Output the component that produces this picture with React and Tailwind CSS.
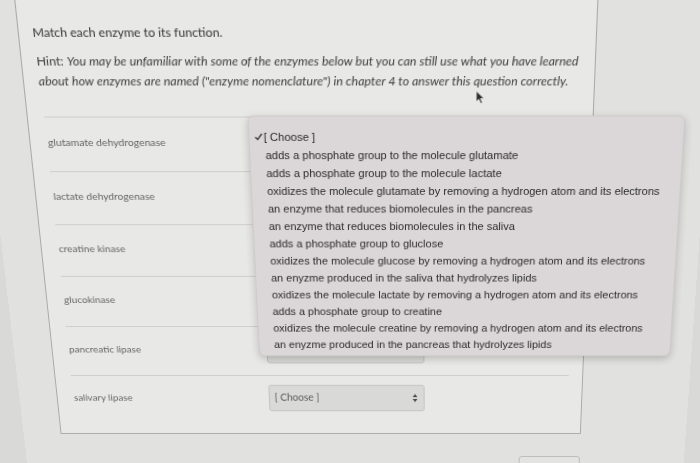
export default function App() {
  const rows = [
    "glutamate dehydrogenase",
    "lactate dehydrogenase",
    "creatine kinase",
    "glucokinase",
    "pancreatic lipase",
    "salivary lipase",
  ];
  const options = [
    "adds a phosphate group to the molecule glutamate",
    "adds a phosphate group to the molecule lactate",
    "oxidizes the molecule glutamate by removing a hydrogen atom and its electrons",
    "an enzyme that reduces biomolecules in the pancreas",
    "an enzyme that reduces biomolecules in the saliva",
    "adds a phosphate group to gluclose",
    "oxidizes the molecule glucose by removing a hydrogen atom and its electrons",
    "an enyzme produced in the saliva that hydrolyzes lipids",
    "oxidizes the molecule lactate by removing a hydrogen atom and its electrons",
    "adds a phosphate group to creatine",
    "oxidizes the molecule creatine by removing a hydrogen atom and its electrons",
    "an enyzme produced in the pancreas that hydrolyzes lipids",
  ];
  return (
    <div className="w-[700px] h-[463px] overflow-hidden bg-[#d9d9d7]">
      <div className="w-[700px] h-[540px] bg-[#e1e1df] origin-[350px_231.5px] [transform:perspective(1000px)_rotateX(-15deg)_skewX(1.3deg)] font-['Lato',sans-serif]">
        <div className="relative ml-[39px] w-[550px] border border-[#a9a9a7] bg-[#e8e8e6] pt-[25px] pb-[12px]">
          <div className="pl-[13px] text-[11.7px] leading-[18px] text-[#333333]">
            Match each enzyme to its function.
          </div>
          <div className="mt-[9px] pl-[14px] text-[12px] leading-[19px] text-[#404040] whitespace-nowrap">
            <span>Hint: </span>
            <span className="italic">
              You may be unfamiliar with some of the enzymes below but you can still use what you have learned
              <br />
              about how enzymes are named ("enzyme nomenclature") in chapter 4 to answer this question correctly.
            </span>
          </div>
          <div className="mt-[25px] ml-[16px] mr-[14px]">
            {rows.map((r) => (
              <div key={r} className="flex h-[54px] items-center border-t border-[#cdcdcb] pb-[4px]">
                <div className="w-[205px] pl-[1px] text-[10.2px] text-[#666666]">{r}</div>
                <div className="flex h-[30px] w-[163px] items-center justify-between rounded-[3px] border border-[#c2c2c0] bg-[#d9d9d7] pl-[5px] pr-[6px]">
                  <span className="text-[10.5px] text-[#5a5a5a]">[ Choose ]</span>
                  <svg width="6" height="10" viewBox="0 0 6 10">
                    <path d="M3 0.5 L5.5 4 L0.5 4 Z" fill="#4a4a4a" />
                    <path d="M3 9.5 L5.5 6 L0.5 6 Z" fill="#4a4a4a" />
                  </svg>
                </div>
              </div>
            ))}
          </div>

          <svg className="absolute left-[434px] top-[90px]" width="9" height="13" viewBox="0 0 9 13">
            <path d="M1 0.5 L1 10.5 L3.5 8.2 L5.3 12.2 L6.8 11.5 L5 7.6 L8.3 7.6 Z" fill="#2a2a2a" stroke="#f0f0f0" strokeWidth="0.6" />
          </svg>

          <div className="absolute left-[213px] top-[114px] w-[425px] rounded-[6px] border border-[#cfcbcb] bg-[#dbd6d7] pt-[11px] pb-[3px] shadow-[0_3px_9px_rgba(0,0,0,0.2)] font-['Liberation_Sans',Arial,sans-serif] text-[11px] leading-[18px] text-[#2b2b2b]">
            <div className="relative pl-[14px]">
              <svg className="absolute left-[5px] top-[5px]" width="8" height="8" viewBox="0 0 8 8">
                <path d="M0.8 4.3 L3 6.6 L7.2 1" fill="none" stroke="#333333" strokeWidth="1.3" />
              </svg>
              [ Choose ]
            </div>
            {options.map((o, i) => (
              <div key={i} className="pl-[15px] whitespace-nowrap">
                {o}
              </div>
            ))}
          </div>
        </div>

        <div className="relative mt-[26px] h-[60px] pt-[9px]">
          <div className="h-[40px] bg-[#d0d0ce]" />
          <div className="absolute left-[524px] top-0 h-[30px] w-[65px] rounded-[3px] border border-[#b9b9b7] bg-[#e3e3e1]" />
        </div>
      </div>
    </div>
  );
}
